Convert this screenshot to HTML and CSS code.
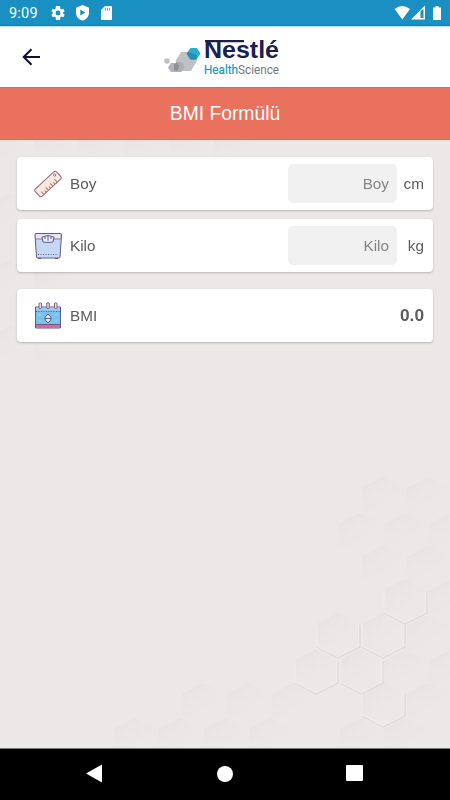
FILE: index.html
```html
<!DOCTYPE html>
<html lang="tr">
<head>
<meta charset="utf-8">
<title>BMI Formülü</title>
<link rel="stylesheet" href="styles.css">
</head>
<body>
<div class="screen">
  <div class="status">
    <span class="clock">9:09</span>
    <svg class="gear" width="14" height="14" viewBox="2 2 20 20"><path fill="#fff" d="M19.4 13c.1-.7.1-1.300 0-2l2.100-1.600-2-3.500-2.500 1a7 7 0 0 0-1.700-1L15 2H9l-.4 3.900a7 7 0 0 0-1.700 1l-2.500-1-2 3.500L4.600 11a7 7 0 0 0 0 2l-2.100 1.600 2 3.500 2.500-1a7 7 0 0 0 1.700 1L9 22h6l.4-3.900a7 7 0 0 0 1.700-1l2.500 1 2-3.500zM12 15.500a3.500 3.500 0 1 1 0-7 3.500 3.500 0 0 1 0 7z"/></svg>
    <svg class="shield" width="13" height="16" viewBox="0 0 13 16"><path fill="#fff" d="M6.500 0 13 2.700v5c0 4-2.800 6.700-6.500 7.900C2.800 14.400 0 11.700 0 7.700v-5z"/><path d="M4.300 4.500v6l5-3z" fill="#198bbd"/></svg>
    <svg class="sd" width="11" height="14" viewBox="0 0 11 14"><path fill="#fff" d="M4 0h6q1 0 1 1v12q0 1-1 1H1q-1 0-1-1V4z"/><path d="M4.500 2v2.500M6.500 2v2.500M8.500 2v2.500" stroke="#5fadd0"/></svg>
    <span class="spacer"></span>
    <svg width="56" height="16" viewBox="0 0 56 16"><path fill="#fff" d="M.5 4Q8 -2 16 4L8.300 14.500z"/><path fill="#fff" fill-rule="evenodd" d="M17 14.500 31 .5v14zM26.500 6v7h3V4z"/><path fill="#fff" d="M41.500 1h3v1.500H47V15h-8V2.500h2.500z"/></svg>
  </div>
  <header class="bar">
    <svg class="back" width="19" height="18" viewBox="0 0 19 18"><path d="M18 9H2M9.500 1.200 1.700 9l7.800 7.800" fill="none" stroke="#10103a" stroke-width="2"/></svg>
    <svg class="logo" width="118" height="46" viewBox="0 -6 118 46">
      <circle cx="3" cy="22" r="2.800" fill="#bfc0c2"/>
      <path d="M7 24h5l3 4-2.500 5H7l-3-4.500z" fill="#b3b4b8"/>
      <path d="M17 13h11l5.500 8-6.500 11H17l-5.500-10z" fill="#c0c1c4"/>
      <path d="M13 23h5l2.500 5-3 5h-5l-2.500-5z" fill="#aeafb3"/>
      <path d="M10 25.500 13 23l2.500 5-2.500 4-3-1z" fill="#8f9095"/>
      <path d="M26.500 9h6.500l3.500 5.500-4 6h-6l-4-6z" fill="#2badcc"/>
      <path d="M24 13l9 3-1.500 4.500h-5l-4-6z" fill="#278eae"/>
      <path d="M41 1h39v2.200H41z" fill="#19204f"/>
      <text class="brand" x="40" y="19" textLength="75" lengthAdjust="spacingAndGlyphs">Nestlé</text>
      <text class="division" x="40" y="34.500" textLength="75" lengthAdjust="spacingAndGlyphs"><tspan class="health">Health</tspan><tspan class="science">Science</tspan></text>
    </svg>
  </header>
  <h1 class="title">BMI Formülü</h1>
  <main class="content">
    <svg class="pattern" width="450" height="608" viewBox="0 140 450 608">
      <defs>
        <linearGradient id="shade" x1="0.1" y1="0" x2="0.500" y2="0.600"><stop offset="0" stop-color="#d9d6d6" stop-opacity=".6"/><stop offset="1" stop-color="#ebe8e8" stop-opacity="0"/></linearGradient>
        <path id="hex" d="M0-22 21-11V11L0 22-21 11V-11z" fill="url(#shade)"/>
        <g id="raised"><use href="#hex"/><path d="M22-10V12L0 23-21 12" fill="none" stroke="#d9d6d6" stroke-width="1.300"/><path d="M20.500-11V11L0 21.500-21 11V-11" fill="none" stroke="#f1eeee"/></g>
      </defs>
      <g opacity=".6">
        <use href="#hex" x="10" y="150"/><use href="#hex" x="55" y="150"/><use href="#hex" x="100" y="150"/><use href="#hex" x="145" y="150"/><use href="#hex" x="190" y="150"/><use href="#hex" x="235" y="150"/>
        <use href="#hex" x="10" y="215"/><use href="#hex" x="10" y="282"/><use href="#hex" x="55" y="282"/><use href="#hex" x="10" y="348"/><use href="#hex" x="55" y="348"/>
        <use href="#hex" x="383" y="499"/><use href="#hex" x="428" y="499"/>
        <use href="#hex" x="360" y="535"/><use href="#hex" x="405" y="535"/><use href="#hex" x="450" y="535"/>
        <use href="#hex" x="383" y="568"/><use href="#hex" x="428" y="568"/>
        <use href="#hex" x="450" y="602"/><use href="#hex" x="428" y="637"/><use href="#hex" x="405" y="672"/><use href="#hex" x="450" y="672"/>
        <use href="#hex" x="203" y="705"/><use href="#hex" x="248" y="705"/><use href="#hex" x="293" y="705"/><use href="#hex" x="428" y="705"/>
        <use href="#hex" x="135" y="740"/><use href="#hex" x="180" y="740"/><use href="#hex" x="225" y="740"/><use href="#hex" x="270" y="740"/><use href="#hex" x="361" y="740"/><use href="#hex" x="405" y="740"/>
      </g>
      <g opacity=".75"><use href="#raised" x="405" y="601"/><use href="#raised" x="338" y="635"/><use href="#raised" x="383" y="635"/><use href="#raised" x="316" y="671"/><use href="#raised" x="361" y="671"/><use href="#raised" x="383" y="704"/></g>
    </svg>
    <section class="card">
      <svg class="icon" width="28" height="28" viewBox="0 0 28 28"><g transform="rotate(-43 14 14)"><rect x="-.5" y="9" width="29" height="10" rx="2" fill="#fbead9" stroke="#8b6c90"/><path d="M4 19v-4M7 19v-2.500M10 19v-4M13 19v-2.500M16 19v-4M19 19v-2.500M22 19v-4" stroke="#b46d6d"/><circle cx="25" cy="12" r="1.100" fill="#fff" stroke="#77577d" stroke-width=".8"/></g></svg>
      <span class="label">Boy</span><span class="field">Boy</span><span class="unit">cm</span>
    </section>
    <section class="card">
      <svg class="icon" width="28" height="28" viewBox="0 0 28 28"><path d="M1.500 1.500h25q1 0 1 1.500L26 25q0 1-1.500 1H4q-1.500 0-1.500-1L1 3z" fill="#c4d8f6" stroke="#6a557b"/><path d="M2 2h24v4H2z" fill="#e5e5f7"/><path d="M1 7h7M20 7h7" stroke="#b57991"/><path d="M8 5Q14 2 20 5l-1 5q-5 1-10 0z" fill="#e5effb" stroke="#625b8c"/><path d="M14 4v5M11 5v2M17 5v2" stroke="#625b8c"/><path d="M4 22.500h20" stroke="#55668f" stroke-dasharray="1 1.500"/><path d="M4 26.500h3M21 26.500h3" stroke="#6a557b"/></svg>
      <span class="label">Kilo</span><span class="field">Kilo</span><span class="unit">kg</span>
    </section>
    <section class="card result">
      <svg class="icon" width="28" height="28" viewBox="0 0 28 28"><path d="M1.500 5h25v21h-25z" fill="#79c2ee" stroke="#5c5b8f"/><path d="M2 5.500h24v3H2z" fill="#a3caec"/><path d="M2 23h24v3H2z" fill="#d76991"/><path d="M1 22.500h26" stroke="#76578c"/><path d="M2 9.500h24" stroke="#535687" stroke-dasharray="1 1.500"/><g fill="#efd7e1" stroke="#76577c" stroke-width=".9"><rect x="5" y=".7" width="2.500" height="6" rx="1.200"/><rect x="12.800" y=".7" width="2.500" height="6" rx="1.200"/><rect x="20.500" y=".7" width="2.500" height="6" rx="1.200"/></g><path d="M14 12l2 2 1.500 2.500L16 19l-2 2-2-2-1.500-2.500L12 14z" fill="#dceafa" stroke="#5c5b8f"/><path d="M10.500 16.500h7" stroke="#5c5b8f"/><path d="M5 13h2M21 13h2M5 19h2M21 19h2" stroke="#a8dcf7"/></svg>
      <span class="label">BMI</span><strong class="value">0.0</strong>
    </section>
  </main>
  <nav class="nav">
    <svg width="16" height="20" viewBox="0 0 16 20"><path d="M0 9.500 16 .5v18z" fill="#fff"/></svg>
    <svg class="home" width="16" height="16" viewBox="0 0 16 16"><circle cx="8" cy="8" r="8" fill="#fff"/></svg>
    <svg width="17" height="17" viewBox="0 0 17 17"><rect width="17" height="16" rx="1" fill="#fff"/></svg>
  </nav>
</div>
</body>
</html>
```
FILE: styles.css
```css
* { box-sizing: border-box; }
body { margin: 0; font-family: "Liberation Sans", Arial, sans-serif; }
svg { display: block; flex: none; }
.screen { width: 450px; height: 800px; display: flex; flex-direction: column; overflow: hidden; }
.status { height: 26px; flex: none; background: #198fc2; border-bottom: 1px solid #147eac; display: flex; align-items: center; padding: 1px 9px 0; }
.clock { color: #fff; font: 14.5px/26px Roboto, sans-serif; width: 42px; letter-spacing: .2px; position: relative; top: 1px; }
.shield { margin-left: 11px; }
.sd { margin-left: 12px; }
.spacer { flex: 1; }
.status svg:last-child { margin-right: -9px; }
.bar { height: 61px; flex: none; background: #fff; border-top: 1px solid #b9e6fa; display: flex; align-items: flex-start; padding-left: 22px; }
.back { margin-top: 21px; }
.logo { margin: 6px 0 0 123px; }
.brand { font: bold 23.5px "Liberation Sans", sans-serif; fill: #19204f; }
.division { font: 12px Roboto, sans-serif; }
.health { fill: #1b9ab4; stroke: #1b9ab4; stroke-width: .2px; }
.science { fill: #77787c; }
.title { height: 53px; flex: none; margin: 0; background: #eb715f; border-top: 1px solid #d76a5b; border-bottom: 1px solid #d66c5d; color: #fff; font-size: 19.3px; line-height: 52px; font-weight: 400; text-align: center; }
.content { height: 608px; flex: none; position: relative; background: #ebe8e7; padding: 17px 17px 0; }
.pattern { position: absolute; left: 0; top: 0; }
.card { position: relative; height: 53px; margin-bottom: 9px; border-radius: 4px; background: #fff; box-shadow: 0 1px 2px rgba(70, 60, 60, .3); display: flex; align-items: center; padding: 0 9px 0 17px; color: #5c5c5c; font-size: 15.3px; }
.result { margin-top: 17px; }
.label { margin-left: 8px; flex: 1; }
.field { width: 109px; height: 39px; border-radius: 5px; background: #f1f1f1; color: #858585; text-align: right; padding-right: 8px; line-height: 40px; }
.unit { width: 27px; text-align: right; }
.value { font-size: 17.3px; color: #5c5c5c; }
.nav { height: 52px; flex: none; background: #000; border-top: 1px solid #777; display: flex; align-items: center; justify-content: space-between; padding: 0 87px 2px 86px; }
.home { margin-left: 2px; }
```
